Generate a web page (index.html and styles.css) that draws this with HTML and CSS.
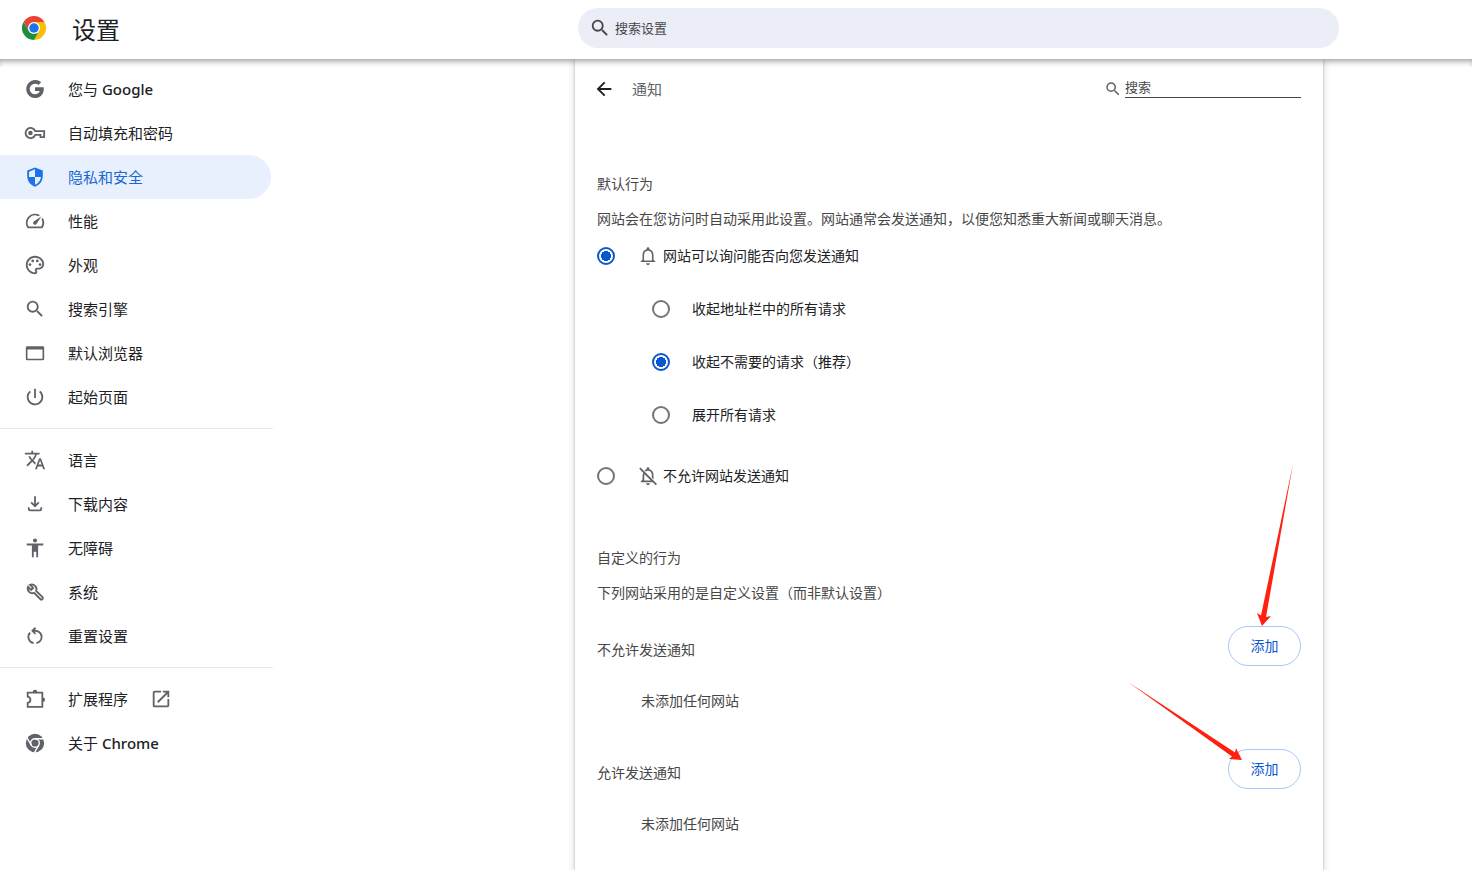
FILE: index.html
```
<!DOCTYPE html>
<html lang="zh-CN">
<head>
<meta charset="utf-8">
<meta name="viewport" content="width=device-width, initial-scale=1">
<title>设置</title>
<link rel="stylesheet" href="styles.css">
</head>
<body>
<header class="toolbar">
  <div class="brand">
    <svg class="logo" viewBox="0 0 48 48" aria-hidden="true">
      <path fill="#ea4335" d="M24 12h20.8A24 24 0 0 0 3.2 12l10.4 18z"/>
      <path fill="#fbbc04" d="M34.4 30 24 48A24 24 0 0 0 44.8 12H24z"/>
      <path fill="#1e8e3e" d="M13.6 30 3.2 12A24 24 0 0 0 24 48l10.4-18z"/>
      <circle cx="24" cy="24" r="12" fill="#fff"/>
      <circle cx="24" cy="24" r="9.5" fill="#1a73e8"/>
    </svg>
    <h1 class="brand-title">设置</h1>
  </div>
  <label class="search">
    <svg class="icon" viewBox="0 0 24 24" aria-hidden="true"><path d="M15.5 14h-.79l-.28-.27A6.47 6.47 0 0 0 16 9.5 6.5 6.5 0 1 0 9.5 16c1.61 0 3.09-.59 4.23-1.57l.27.28v.79l5 4.99L20.49 19l-4.99-5zm-6 0C7.01 14 5 11.99 5 9.5S7.01 5 9.5 5 14 7.01 14 9.5 11.99 14 9.5 14z"/></svg>
    <input class="search-input" type="text" placeholder="搜索设置" aria-label="搜索设置">
  </label>
</header>

<div class="page">
  <nav class="menu" aria-label="设置">
    <a class="menu-item" href="#people">
      <svg class="icon" viewBox="0 0 24 24" aria-hidden="true"><path d="M21.4 10.200H12v4.100h5.200c-.5 2.200-2.500 3.500-5.200 3.500a5.800 5.800 0 1 1 0-11.600c1.400 0 2.700.5 3.700 1.400l3.100-3.100A9.900 9.900 0 1 0 12 21.900c5 0 9.600-3.600 9.600-9.900 0-.6-.1-1.200-.2-1.800z"/></svg>
      <span>您与 <span class="latin">Google</span></span></a>
    <a class="menu-item" href="#autofill">
      <svg class="icon outline" viewBox="0 0 24 24" aria-hidden="true"><path d="M12.300 10H22v6.500h-4V14h-5.700A5.500 5.500 0 1 1 12.300 10z"/><circle cx="7" cy="12" r="2.500" class="solid"/></svg>
      <span>自动填充和密码</span></a>
    <a class="menu-item selected" href="#privacy" aria-current="page">
      <svg class="icon" viewBox="0 0 24 24" aria-hidden="true"><path d="M12 1.500 3.500 5v6c0 5.300 3.600 10.300 8.500 11.500 4.900-1.200 8.500-6.200 8.500-11.500V5zm0 10.500h6.500c-.5 3.900-3.100 7.300-6.500 8.400V12H5.500V6.400L12 3.600z"/></svg>
      <span>隐私和安全</span></a>
    <a class="menu-item" href="#performance">
      <svg class="icon" viewBox="0 0 24 24" aria-hidden="true"><path d="m20.380 8.570-1.230 1.850a8 8 0 0 1-.22 7.580H5.070A8 8 0 0 1 15.580 6.850l1.850-1.230A10 10 0 0 0 3.350 19a2 2 0 0 0 1.720 1h13.850a2 2 0 0 0 1.740-1 10 10 0 0 0-.27-10.440zm-9.790 6.840a2 2 0 0 0 2.830 0l5.660-8.490-8.490 5.660a2 2 0 0 0 0 2.830z"/></svg>
      <span>性能</span></a>
    <a class="menu-item" href="#appearance">
      <svg class="icon" viewBox="0 0 24 24" aria-hidden="true"><path d="M12 22C6.490 22 2 17.510 2 12S6.490 2 12 2s10 4.040 10 9c0 3.310-2.690 6-6 6h-1.770c-.28 0-.5.220-.5.500 0 .120.050.230.130.330.410.470.640 1.060.640 1.670A2.500 2.500 0 0 1 12 22zm0-18c-4.410 0-8 3.590-8 8s3.590 8 8 8c.28 0 .5-.22.500-.5a.54.540 0 0 0-.14-.35c-.41-.46-.63-1.050-.63-1.650a2.500 2.500 0 0 1 2.500-2.500H16c2.210 0 4-1.790 4-4 0-3.860-3.590-7-8-7z"/><circle cx="6.500" cy="11.500" r="1.500"/><circle cx="9.500" cy="7.500" r="1.500"/><circle cx="14.500" cy="7.500" r="1.500"/><circle cx="17.500" cy="11.500" r="1.500"/></svg>
      <span>外观</span></a>
    <a class="menu-item" href="#search">
      <svg class="icon" viewBox="0 0 24 24" aria-hidden="true"><path d="M15.500 14h-.79l-.28-.27A6.470 6.470 0 0 0 16 9.500 6.500 6.500 0 1 0 9.500 16c1.610 0 3.090-.59 4.230-1.570l.27.280v.79l5 4.990L20.490 19l-4.990-5zm-6 0C7.010 14 5 11.990 5 9.500S7.010 5 9.500 5 14 7.010 14 9.500 11.990 14 9.500 14z"/></svg>
      <span>搜索引擎</span></a>
    <a class="menu-item" href="#browser">
      <svg class="icon" viewBox="0 0 24 24" aria-hidden="true"><path d="M20.500 4.500h-17A1.500 1.500 0 0 0 2 6v12.500A1.500 1.500 0 0 0 3.500 20h17a1.500 1.500 0 0 0 1.500-1.500V6a1.500 1.500 0 0 0-1.500-1.500zm-.3 13.700H3.800V8.200h16.400z"/></svg>
      <span>默认浏览器</span></a>
    <a class="menu-item" href="#startup">
      <svg class="icon" viewBox="0 0 24 24" aria-hidden="true"><path d="M13 3h-2v10h2V3zm4.830 2.170-1.420 1.420A6.920 6.920 0 0 1 19 12a7 7 0 1 1-11.420-5.420L6.170 5.170A8.930 8.930 0 0 0 3 12a9 9 0 1 0 14.830-6.830z"/></svg>
      <span>起始页面</span></a>
    <hr class="menu-line">
    <a class="menu-item" href="#languages">
      <svg class="icon" viewBox="0 0 24 24" aria-hidden="true"><path d="m12.870 15.070-2.540-2.510.03-.03A17.520 17.520 0 0 0 14.070 6H17V4h-7V2H8v2H1v1.990h11.170C11.500 7.920 10.440 9.750 9 11.350 8.070 10.320 7.300 9.190 6.690 8h-2c.73 1.630 1.730 3.170 2.980 4.560l-5.090 5.020L4 19l5-5 3.110 3.110.76-2.040zM18.500 10h-2L12 22h2l1.120-3h4.750L21 22h2l-4.500-12zm-2.620 7 1.620-4.330L19.120 17h-3.240z"/></svg>
      <span>语言</span></a>
    <a class="menu-item" href="#downloads">
      <svg class="icon outline" viewBox="0 0 24 24" aria-hidden="true"><path d="M12 3.500V14M7.800 10.200 12 14.400l4.200-4.200M5.200 15.500v2q0 1.500 1.500 1.500h10.600q1.500 0 1.500-1.500v-2"/></svg>
      <span>下载内容</span></a>
    <a class="menu-item" href="#accessibility">
      <svg class="icon" viewBox="0 0 24 24" aria-hidden="true"><circle cx="12" cy="3.900" r="2.200"/><path d="M21 9.200h-5.600V22h-2v-6h-2.800v6h-2V9.200H3v-2h18z"/></svg>
      <span>无障碍</span></a>
    <a class="menu-item" href="#system">
      <svg class="icon outline" viewBox="0 0 24 24" aria-hidden="true"><path d="M4.400 6.300a5.200 5.200 0 0 0 6.700 6.700l6.900 6.900q.9.900 1.800 0l.4-.4q.9-.9 0-1.800l-6.900-6.900A5.200 5.200 0 0 0 6.600 4.100l3.400 3.400L7.800 9.700z"/></svg>
      <span>系统</span></a>
    <a class="menu-item" href="#reset">
      <svg class="icon outline" viewBox="0 0 24 24" aria-hidden="true"><path d="M10.500 19.800a6.800 6.800 0 0 1-3.800-11.400M13.500 19.800A6.800 6.800 0 0 0 12 6.300H9.500M12.500 3 9.200 6.300l3.300 3.300"/></svg>
      <span>重置设置</span></a>
    <hr class="menu-line">
    <a class="menu-item" href="#extensions">
      <svg class="icon outline" viewBox="0 0 24 24" aria-hidden="true"><path d="M4 5h16v15.500H4v-4.200c4-1 4-6 0-7z"/><path class="solid" d="M9.500 4.500a2.500 2.500 0 0 1 5 0zM20.500 10.300a2.500 2.500 0 0 1 0 5z"/></svg>
      <span>扩展程序</span>
      <svg class="icon external" viewBox="0 0 24 24" aria-hidden="true"><path d="M19 19H5V5h7V3H5a2 2 0 0 0-2 2v14a2 2 0 0 0 2 2h14c1.100 0 2-.9 2-2v-7h-2v7zM14 3v2h3.590l-9.830 9.830 1.410 1.410L19 6.410V10h2V3h-7z"/></svg></a>
    <a class="menu-item" href="#about">
      <svg class="icon" viewBox="0 0 24 24" aria-hidden="true"><circle cx="12" cy="12" r="10"/><circle cx="12" cy="12" r="4.700" class="ring"/><path class="ring" d="M12 7.300h9.500M7.900 14.300 3.200 6.200M16.100 14.300l-4.700 8.200"/></svg>
      <span>关于 <span class="latin">Chrome</span></span></a>
  </nav>

  <main class="card">
    <div class="card-head">
      <button class="back" type="button" aria-label="返回">
        <svg class="icon" viewBox="0 0 24 24" aria-hidden="true"><path d="M20 10.800H8L13.500 5.400 12 4l-8 8 8 8 1.500-1.400L8 13.200h12z"/></svg>
      </button>
      <h2 class="card-title">通知</h2>
      <label class="filter">
        <svg class="icon small" viewBox="0 0 24 24" aria-hidden="true"><path d="M15.500 14h-.79l-.28-.27A6.470 6.470 0 0 0 16 9.500 6.500 6.500 0 1 0 9.500 16c1.610 0 3.090-.59 4.230-1.570l.27.280v.79l5 4.990L20.490 19l-4.990-5zm-6 0C7.010 14 5 11.990 5 9.500S7.010 5 9.500 5 14 7.010 14 9.500 11.990 14 9.500 14z"/></svg>
        <input class="filter-input" type="text" placeholder="搜索" aria-label="搜索">
      </label>
    </div>

    <section class="defaults">
      <h3 class="heading">默认行为</h3>
      <p class="note">网站会在您访问时自动采用此设置。网站通常会发送通知，以便您知悉重大新闻或聊天消息。</p>
      <label class="option">
        <input class="radio" type="radio" name="default" checked>
        <svg class="icon" viewBox="0 0 24 24" aria-hidden="true"><path d="M12 22c1.100 0 2-.9 2-2h-4c0 1.100.89 2 2 2zm6-6v-5c0-3.070-1.640-5.640-4.500-6.320V4a1.500 1.500 0 0 0-3 0v.68C7.630 5.360 6 7.920 6 11v5l-2 2v.5h16V18zm-1.700 1H7.700v-6c0-2.700 1.600-4.800 4.300-4.800s4.300 2.100 4.300 4.800z"/></svg>
        <span>网站可以询问能否向您发送通知</span>
      </label>
      <div class="suboptions">
        <label class="option"><input class="radio" type="radio" name="request"><span>收起地址栏中的所有请求</span></label>
        <label class="option"><input class="radio" type="radio" name="request" checked><span>收起不需要的请求（推荐）</span></label>
        <label class="option"><input class="radio" type="radio" name="request"><span>展开所有请求</span></label>
      </div>
      <label class="option">
        <input class="radio" type="radio" name="default">
        <svg class="icon" viewBox="0 0 24 24" aria-hidden="true"><path d="M12 22c1.100 0 2-.9 2-2h-4c0 1.100.9 2 2 2zM3.800 2.700 2.400 4.100l4.500 4.500A7.600 7.600 0 0 0 6 12v4l-2 2v.9h13.200l3.200 3.200 1.400-1.400zM7.900 17v-5c0-.7.1-1.300.3-1.900l6.900 6.900zM16.200 12v2l1.800 1.800V11c0-3.100-1.600-5.600-4.500-6.300V4a1.500 1.500 0 0 0-3 0v.7c-.9.2-1.600.6-2.300 1.100l1.300 1.300c.7-.5 1.600-.7 2.500-.7 2.600 0 4.200 2 4.200 4.600z"/></svg>
        <span>不允许网站发送通知</span>
      </label>
    </section>

    <section class="custom">
      <h3 class="heading">自定义的行为</h3>
      <p class="note">下列网站采用的是自定义设置（而非默认设置）</p>
      <div class="site-list">
        <div class="site-head">
          <h4 class="site-title">不允许发送通知</h4>
          <div class="action">
            <button class="add" type="button">添加</button>
            <svg class="arrow arrow-down" viewBox="0 0 38 164" aria-hidden="true"><path d="M37 0 5 151.500 1 149 6 162l9-10-5 1z"/></svg>
          </div>
        </div>
        <p class="empty">未添加任何网站</p>
      </div>
      <div class="site-list">
        <div class="site-head">
          <h4 class="site-title">允许发送通知</h4>
          <div class="action">
            <button class="add" type="button">添加</button>
            <svg class="arrow arrow-right" viewBox="0 0 116 80" aria-hidden="true"><path d="M0 0 107 70.500 108 66 114 78 101 77 104 74.500z"/></svg>
          </div>
        </div>
        <p class="empty">未添加任何网站</p>
      </div>
    </section>
  </main>
</div>
</body>
</html>
```
FILE: styles.css
```
* {
  box-sizing: border-box;
}

body {
  display: flex;
  flex-direction: column;
  min-height: 100vh;
  margin: 0;
  background: #fff;
  color: #202124;
  font-family: "Open Sans", "Noto Sans CJK SC", sans-serif;
  font-size: 14px;
  line-height: 22px;
}

h1, h2, h3, h4, p {
  margin: 0;
  font-weight: 400;
}

input, button {
  font: inherit;
}

.icon {
  flex: none;
  width: 22px;
  height: 22px;
  fill: #5f6368;
}

.outline {
  fill: none;
  stroke: #5f6368;
  stroke-width: 2;
}

.solid {
  fill: #5f6368;
  stroke: none;
}

.ring {
  fill: none;
  stroke: #fff;
  stroke-width: 1.5px;
}

/* Top bar */
.toolbar {
  position: relative;
  z-index: 1;
  display: grid;
  grid-template-columns: 578fr minmax(0, 761px) 133fr;
  height: 59px;
  background: #fff;
}

.toolbar::after {
  content: "";
  position: absolute;
  top: 100%;
  left: 0;
  right: 0;
  height: 8px;
  box-shadow: inset 0 5px 6px -3px rgba(0, 0, 0, 0.4);
  pointer-events: none;
}

.brand {
  display: flex;
  align-items: center;
  gap: 26px;
  padding-left: 22px;
}

.logo {
  width: 24px;
  height: 24px;
  margin-bottom: 3px;
}

.brand-title {
  font-size: 24px;
  line-height: 32px;
}

.search {
  display: flex;
  align-items: center;
  gap: 4px;
  height: 40px;
  margin-top: 8px;
  padding: 0 11px;
  border-radius: 20px;
  background: #ebeef7;
}

.search .icon {
  fill: #474747;
}

.search-input {
  flex: 1;
  min-width: 0;
  padding: 0;
  border: 0;
  outline: 0;
  background: none;
  font-size: 13px;
}

.search-input::placeholder,
.filter-input::placeholder {
  color: #474747;
  opacity: 1;
}

/* Page columns */
.page {
  flex: 1;
  display: grid;
  grid-template-columns: minmax(273px, 575fr) minmax(0, 748px) 149fr;
}

.menu {
  width: 273px;
  padding-top: 8px;
}

.menu-item {
  display: flex;
  align-items: center;
  gap: 22px;
  height: 44px;
  margin-right: 2px;
  padding-left: 24px;
  border-radius: 0 22px 22px 0;
  color: #202124;
  font-size: 15px;
  text-decoration: none;
}

.latin {
  font-family: "Noto Sans", "Open Sans", sans-serif;
  font-weight: 500;
}

.selected {
  background: #e8f0fe;
  color: #1967d2;
}

.selected .icon {
  fill: #1a73e8;
}

.menu-line {
  height: 1px;
  margin: 9px 0;
  border: 0;
  background: #e8eaed;
}

/* Content card */
.card {
  padding: 0 22px 24px;
  background: #fff;
  box-shadow: 0 1px 2px 0 rgba(60, 64, 67, 0.3), 0 2px 6px 2px rgba(60, 64, 67, 0.15);
}

.card-head {
  display: flex;
  align-items: center;
  height: 60px;
}

.back {
  display: flex;
  margin-left: -4px;
  padding: 0;
  border: 0;
  background: none;
}

.back .icon {
  fill: #202124;
}

.card-title {
  flex: 1;
  margin-left: 17px;
  color: #5f6368;
  font-size: 15px;
}

.filter {
  display: flex;
  align-items: center;
  gap: 3px;
}

.small {
  width: 18px;
  height: 18px;
}

.filter-input {
  width: 176px;
  height: 20px;
  margin: 0 0 2px;
  padding: 0 0 2px;
  border: 0;
  border-bottom: 1px solid #474747;
  outline: 0;
  background: none;
  font-size: 13px;
}

.defaults {
  margin-top: 54px;
}

.custom {
  margin-top: 44px;
}

.heading,
.note,
.site-title,
.empty {
  color: #474747;
  font-size: 14px;
}

.note {
  margin-top: 13px;
}

.option {
  display: flex;
  align-items: center;
  height: 53px;
  padding-bottom: 1px;
  color: #202124;
}

.option .icon {
  margin-right: 4px;
}

.suboptions {
  margin-bottom: 8px;
  padding-left: 55px;
}

.radio {
  appearance: none;
  flex: none;
  width: 18px;
  height: 18px;
  margin: 0 22px 0 0;
  border: 2px solid #757575;
  border-radius: 50%;
}

.radio:checked {
  border-color: #0b57d0;
  background: radial-gradient(circle, #0b57d0 5px, transparent 5px);
}

.site-list {
  margin-top: 22px;
}

.site-list + .site-list {
  margin-top: 37px;
}

.site-head {
  display: flex;
  align-items: center;
  justify-content: space-between;
}

.site-title {
  padding-top: 8px;
}

.action {
  position: relative;
}

.add {
  display: block;
  min-width: 73px;
  height: 40px;
  padding: 0 21px;
  border: 1px solid #a8c7fa;
  border-radius: 20px;
  background: #fff;
  color: #0b57d0;
}

.empty {
  margin-top: 24px;
  padding-left: 44px;
}

/* Pointers over the add buttons */
.arrow {
  position: absolute;
  fill: #ff2010;
  pointer-events: none;
}

.arrow-down {
  right: 7px;
  bottom: 38px;
  width: 38px;
  height: 164px;
}

.arrow-right {
  right: 57px;
  bottom: 27px;
  width: 116px;
  height: 80px;
}
```
